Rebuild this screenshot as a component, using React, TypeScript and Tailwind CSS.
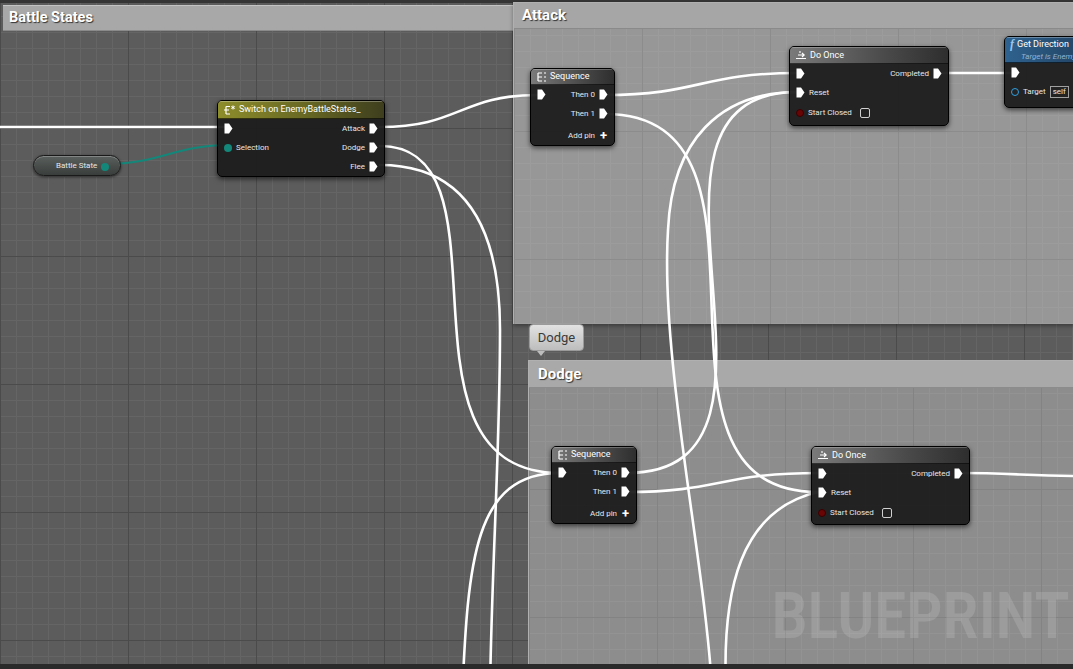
import React from 'react';

const FONT = "font-['Roboto','Liberation_Sans',sans-serif]";

function ExecPin() {
  return (
    <svg width="9" height="11" viewBox="0 0 9 11" className="shrink-0">
      <path d="M0.5 0.5 H5 L8.5 5.5 L5 10.5 H0.5 Z" fill="#ffffff" />
    </svg>
  );
}

function DataPin({ color = '#13877a' }: { color?: string }) {
  return <span className="inline-block w-[8px] h-[8px] rounded-full shrink-0" style={{ background: color }} />;
}

function SeqIcon() {
  return (
    <svg width="11" height="10" viewBox="0 0 11 10" className="shrink-0">
      <path d="M2 1 V9 M2 1 H6 M2 5 H6 M2 9 H6 M8 1 H10 M8 5 H10 M8 9 H10" stroke="#fff" strokeWidth="1.2" fill="none" />
    </svg>
  );
}

function SwitchIcon() {
  return (
    <svg width="13" height="10" viewBox="0 0 13 10" className="shrink-0">
      <path d="M3 1.5 V9 M3 1.5 H7 M1 5 H6 M3 9 H7" stroke="#fff" strokeWidth="1.2" fill="none" />
      <path d="M10 0.5 V4.5 M8.3 1.5 L11.7 3.5 M11.7 1.5 L8.3 3.5" stroke="#fff" strokeWidth="1" fill="none" />
    </svg>
  );
}

function OnceIcon() {
  return (
    <svg width="12" height="10" viewBox="0 0 12 10" className="shrink-0">
      <path d="M1 8.5 H11 M3 5 H9 M7 3 L9.2 5 L7 7 M5 1 V3" stroke="#fff" strokeWidth="1.1" fill="none" />
    </svg>
  );
}

type Row = { l?: React.ReactNode; r?: React.ReactNode; cls?: string };

function Node({
  pos,
  title,
  headerCls,
  icon,
  rows,
  sub,
}: {
  pos: string;
  title: string;
  headerCls: string;
  icon: React.ReactNode;
  rows: Row[];
  sub?: string;
}) {
  return (
    <div className={`absolute ${pos} rounded-[5px] bg-[#1c1c1c]/95 border border-black shadow-[0_2px_5px_rgba(0,0,0,0.6)] overflow-hidden flex flex-col`}>
      <div className={`${headerCls} flex flex-col justify-center px-[5px] border-b border-black/60`}>
        <div className="flex items-center gap-[3px] text-white text-[9px] leading-none">
          {icon}
          <span className="whitespace-nowrap">{title}</span>
        </div>
        {sub && <div className="text-[8px] italic text-[#8fb3d4] leading-none mt-[3px] pl-[11px] whitespace-nowrap">{sub}</div>}
      </div>
      <div className="flex flex-col px-[6px]">
        {rows.map((row, i) => (
          <div key={i} className={`h-[19px] flex items-center justify-between text-[8px] text-[#e8e8e8] ${row.cls ?? ''}`}>
            <div className="flex items-center gap-[4px]">{row.l}</div>
            <div className="flex items-center gap-[4px]">{row.r}</div>
          </div>
        ))}
      </div>
    </div>
  );
}

function Checkbox() {
  return <span className="inline-block w-[10px] h-[10px] rounded-[2px] border-[1.5px] border-[#d0d0d0] ml-[4px]" />;
}

function RedPin() {
  return <span className="inline-block w-[8px] h-[8px] rounded-full bg-[#6a0505] border border-[#3a0000] shrink-0" />;
}

const GRID_DARK =
  'bg-[#5c5c5c] bg-[linear-gradient(to_right,#4b4b4b_1px,transparent_1px),linear-gradient(to_bottom,#4b4b4b_1px,transparent_1px),linear-gradient(to_right,#656565_1px,transparent_1px),linear-gradient(to_bottom,#656565_1px,transparent_1px)] bg-size-[128px_128px,128px_128px,16px_16px,16px_16px]';

const GRID_ATTACK =
  'bg-[#979797] bg-[linear-gradient(to_right,#8c8c8c_1px,transparent_1px),linear-gradient(to_bottom,#8c8c8c_1px,transparent_1px),linear-gradient(to_right,#9c9c9c_1px,transparent_1px),linear-gradient(to_bottom,#9c9c9c_1px,transparent_1px)] bg-size-[128px_128px,128px_128px,16px_16px,16px_16px]';

const GRID_DODGE =
  'bg-[#8d8d8d] bg-[linear-gradient(to_right,#838383_1px,transparent_1px),linear-gradient(to_bottom,#838383_1px,transparent_1px),linear-gradient(to_right,#939393_1px,transparent_1px),linear-gradient(to_bottom,#939393_1px,transparent_1px)] bg-size-[128px_128px,128px_128px,16px_16px,16px_16px]';

const GREY_HEAD = 'bg-[linear-gradient(to_right,#7a7a7a,#4a4a4a_60%,#2e2e2e)] shadow-[inset_0_1px_0_rgba(255,255,255,0.25)]';

export default function App() {
  return (
    <div className={`relative w-[1073px] h-[669px] overflow-hidden ${GRID_DARK} ${FONT}`}>
      {/* top strip */}
      <div className="absolute left-0 top-0 w-full h-[3px] bg-[#353535]" />

      {/* Battle States comment */}
      <div className="absolute left-[3px] top-[5px] w-[512px] h-[26px] bg-[#a8a8a8] border-t border-[#c4c4c4] border-b border-b-[#8a8a8a] flex items-center px-[6px]">
        <span className="text-white font-bold text-[14.5px] [text-shadow:1px_1px_1px_rgba(0,0,0,0.7)]">Battle States</span>
      </div>

      {/* Attack comment */}
      <div className={`absolute left-[513px] top-[2px] w-[570px] h-[322px] ${GRID_ATTACK} border-l border-t border-[#b0b0b0] shadow-[0_2px_4px_rgba(0,0,0,0.35)]`}>
        <div className="h-[26px] bg-[#a6a6a6] border-b border-[#8a8a8a] flex items-center px-[8px]">
          <span className="text-white font-bold text-[15px] [text-shadow:1px_1px_1px_rgba(0,0,0,0.7)]">Attack</span>
        </div>
      </div>

      {/* Dodge bubble */}
      <div className="absolute left-[529px] top-[324px] w-[55px] h-[27px] rounded-[4px] bg-[linear-gradient(to_bottom,#e2e2e2,#bdbdbd)] border border-[#9a9a9a] flex items-center justify-center text-[13px] text-[#3a3a3a]">
        Dodge
      </div>
      <div className="absolute left-[537px] top-[351px] w-0 h-0 border-l-[4px] border-r-[4px] border-t-[5px] border-l-transparent border-r-transparent border-t-[#bdbdbd]" />

      {/* Dodge comment */}
      <div className={`absolute left-[528px] top-[360px] w-[555px] h-[320px] ${GRID_DODGE} border-l border-t border-[#b0b0b0]`}>
        <div className="h-[27px] bg-[#a9a9a9] border-b border-[#8c8c8c] flex items-center px-[9px]">
          <span className="text-white font-bold text-[15px] [text-shadow:1px_1px_1px_rgba(0,0,0,0.7)]">Dodge</span>
        </div>
      </div>

      {/* watermark */}
      <div className="absolute left-[772px] top-[585px] w-[352px] origin-left scale-x-[0.86] text-[64px] font-bold text-white/[0.13] leading-none tracking-[1px] select-none">
        BLUEPRINT
      </div>

      {/* wires */}
      <svg className="absolute left-0 top-0" width="1073" height="669" fill="none">
        <g stroke="#ffffff" strokeWidth="2.6" strokeLinecap="round">
          <path d="M-5 127 L226 127" />
          <path d="M380 127 C460 127 460 95 538 95" />
          <path d="M380 146 C520 146 380 473 560 473" />
          <path d="M380 165 C460 165 500 220 500 330 C500 450 492 560 490 690" />
          <path d="M462 700 C468 560 474 473 560 473" />
          <path d="M605 95 C700 95 700 73 798 73" />
          <path d="M940 73 L1013 73" />
          <path d="M605 114 C805 114 618 492 818 492" />
          <path d="M627 473 C827 473 598 92 798 92" />
          <path d="M627 492 C720 492 720 473 819 473" />
          <path d="M712 690 C705 560 660 360 668 230 C672 140 720 92 798 92" />
          <path d="M726 690 C722 590 740 510 818 492" />
          <path d="M960 473 C1010 473 1030 476 1080 476" />
        </g>
        <path d="M106 164 C160 164 175 145 229 145" stroke="#13877a" strokeWidth="2" />
      </svg>

      {/* Battle State variable */}
      <div className="absolute left-[33px] top-[155px] w-[88px] h-[21px] rounded-full bg-[linear-gradient(to_bottom,#5a605d,#393d3b)] border border-[#1a1a1a] shadow-[0_1px_3px_rgba(0,0,0,0.6),inset_0_1px_0_rgba(255,255,255,0.25)] flex items-center pl-[22px]">
        <span className="text-[8px] text-[#e6e6e6]">Battle State</span>
        <span className="ml-auto mr-[11px]">
          <DataPin />
        </span>
      </div>

      <Node
        pos="left-[217px] top-[100px] w-[168px] h-[77px]"
        title="Switch on EnemyBattleStates_"
        headerCls="h-[18px] bg-[linear-gradient(to_right,#8d8d2c,#6a6a24_50%,#3e3e1e)] shadow-[inset_0_1px_0_rgba(255,255,255,0.3)]"
        icon={<SwitchIcon />}
        rows={[
          { l: <ExecPin />, r: <><span>Attack</span><ExecPin /></> },
          { l: <><DataPin /><span>Selection</span></>, r: <><span>Dodge</span><ExecPin /></> },
          { r: <><span>Flee</span><ExecPin /></> },
        ]}
      />

      <Node
        pos="left-[530px] top-[68px] w-[85px] h-[78px]"
        title="Sequence"
        headerCls={`h-[17px] ${GREY_HEAD}`}
        icon={<SeqIcon />}
        rows={[
          { l: <ExecPin />, r: <><span>Then 0</span><ExecPin /></> },
          { r: <><span>Then 1</span><ExecPin /></> },
          { r: <><span>Add pin</span><span className="text-[13px] font-bold text-white leading-none w-[9px] text-center">+</span></>, cls: 'mt-[3px]' },
        ]}
      />

      <Node
        pos="left-[789px] top-[46px] w-[160px] h-[80px]"
        title="Do Once"
        headerCls={`h-[17px] ${GREY_HEAD}`}
        icon={<OnceIcon />}
        rows={[
          { l: <ExecPin />, r: <><span>Completed</span><ExecPin /></> },
          { l: <><ExecPin /><span>Reset</span></> },
          { l: <><RedPin /><span>Start Closed</span><Checkbox /></>, cls: 'mt-[1px]' },
        ]}
      />

      <Node
        pos="left-[1004px] top-[36px] w-[110px] h-[72px]"
        title="Get Direction"
        sub="Target is Enemy"
        headerCls="h-[26px] bg-[linear-gradient(to_right,#2f628f,#24496b_60%,#1c3450)] shadow-[inset_0_1px_0_rgba(255,255,255,0.3)]"
        icon={<span className="text-[12px] italic font-bold text-[#9cc6ee] font-['Liberation_Serif',serif] leading-none">f</span>}
        rows={[
          { l: <ExecPin /> },
          {
            l: (
              <>
                <span className="inline-block w-[8px] h-[8px] rounded-full border-[1.5px] border-[#2fa0e0]" />
                <span>Target</span>
                <span className="border border-[#a0a0a0] px-[2px] text-[8px] leading-[10px]">self</span>
              </>
            ),
          },
        ]}
      />

      <Node
        pos="left-[551px] top-[446px] w-[86px] h-[78px]"
        title="Sequence"
        headerCls={`h-[17px] ${GREY_HEAD}`}
        icon={<SeqIcon />}
        rows={[
          { l: <ExecPin />, r: <><span>Then 0</span><ExecPin /></> },
          { r: <><span>Then 1</span><ExecPin /></> },
          { r: <><span>Add pin</span><span className="text-[13px] font-bold text-white leading-none w-[9px] text-center">+</span></>, cls: 'mt-[3px]' },
        ]}
      />

      <Node
        pos="left-[811px] top-[446px] w-[159px] h-[79px]"
        title="Do Once"
        headerCls={`h-[17px] ${GREY_HEAD}`}
        icon={<OnceIcon />}
        rows={[
          { l: <ExecPin />, r: <><span>Completed</span><ExecPin /></> },
          { l: <><ExecPin /><span>Reset</span></> },
          { l: <><RedPin /><span>Start Closed</span><Checkbox /></>, cls: 'mt-[1px]' },
        ]}
      />

      {/* bottom strip */}
      <div className="absolute left-0 bottom-0 w-full h-[5px] bg-[#2a2a2a]" />
    </div>
  );
}
